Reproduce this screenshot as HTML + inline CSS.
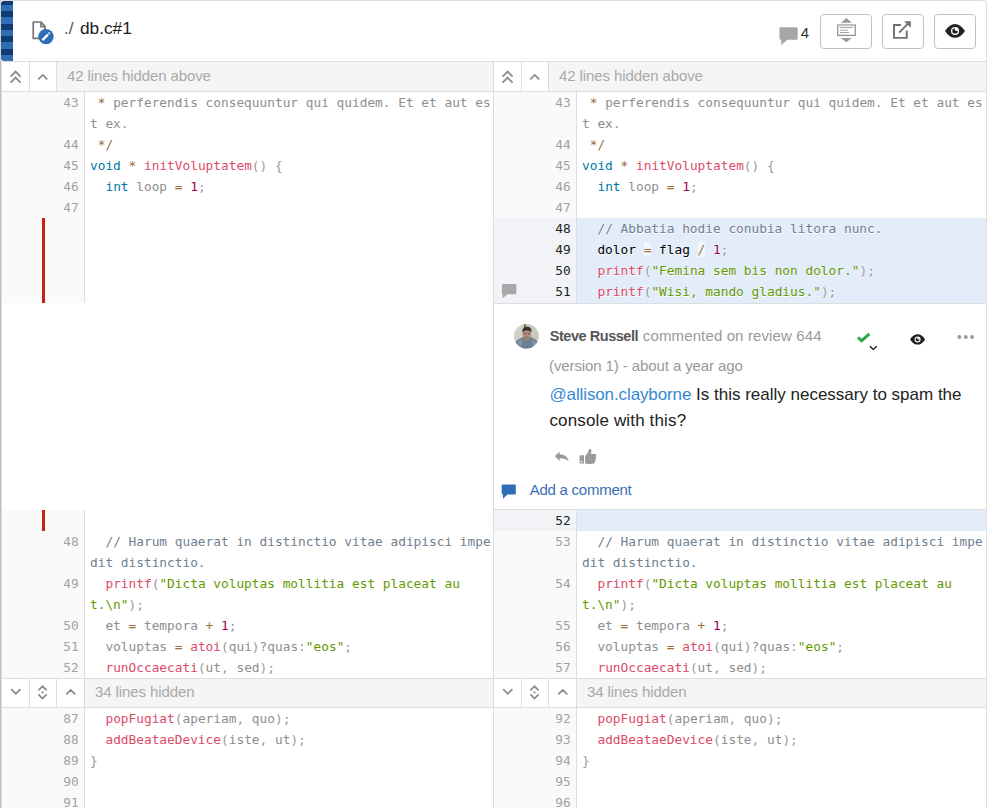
<!DOCTYPE html>
<html lang="en">
<head>
<meta charset="utf-8">
<title>db.c#1</title>
<style>
*{box-sizing:border-box;margin:0;padding:0}
html,body{width:988px;height:808px;overflow:hidden;background:#fff}
body{position:relative;font-family:"Liberation Sans",sans-serif;color:#222}
.abs{position:absolute}
/* card frame */
#btop{left:0;top:0;width:987px;height:830px;border-top:1px solid #dedede;border-right:1px solid #dedede;border-radius:0 4px 0 0}
#bright{display:none}
#bleft0{left:0;top:0;width:1px;height:61px;background:#d8d2cc}
#bleft{left:0;top:61px;width:1px;height:747px;background:#bcbcbc}
#bleft2{left:1px;top:61px;width:1px;height:747px;background:#e2e2e2}
#hline{left:13px;top:61px;width:974px;height:1px;background:#dedede}
#stripe{left:1px;top:1px;width:12px;height:60px;border-radius:3px 0 0 3px;
 background:linear-gradient(180deg,#0f3b73 0 4px,#2f6db5 4px 10px,#0f3b73 10px 16px,#2f6db5 16px 23px,#0f3b73 23px 29px,#2f6db5 29px 35px,#0f3b73 35px 41px,#2f6db5 41px 48px,#0f3b73 48px 54px,#2f6db5 54px 60px)}
#mid{left:493px;top:61px;width:1px;height:747px;background:#dcdcdc}
/* header */
#title{left:64px;top:18px;font-size:17.300px;line-height:20px;white-space:nowrap;color:#1b1c1d;word-spacing:1.500px}
#title .p{color:#555}
.hbtn{top:14px;height:35px;border:1px solid #c2c2c2;border-radius:4px;background:#fff}
#cnt{left:800.700px;top:25.400px;font-size:15px;line-height:16px;color:#333}
/* expander bars */
.exp{height:30px;border-top:1px solid #dedede;border-bottom:1px solid #dedede;background:#f5f5f5}
.exp .b{position:absolute;top:0;bottom:0;background:#fff;border-right:1px solid #dedede}
.exp .t{position:absolute;top:-.700px;height:28px;line-height:28px;font-size:15px;color:#a9a9a9;white-space:nowrap;letter-spacing:-.100px}
/* code rows */
.pane{top:92px;width:493px;overflow:hidden}
.r{position:relative;height:21px;width:100%}
.g{position:absolute;left:1px;top:0;width:83px;height:100%;background:#fafafa;border-right:1px solid #dedede;
 font-family:"DejaVu Sans Mono","Liberation Mono",monospace;font-size:12.8px;line-height:21px;text-align:right;padding-right:5.300px;color:#a2a2a2;white-space:pre}
.c{position:absolute;left:84px;top:0;right:0;height:100%;padding-left:5px;
 font-family:"DejaVu Sans Mono","Liberation Mono",monospace;font-size:12.8px;line-height:21px;white-space:pre;color:#8e8e8e;text-shadow:0 1px #fff}
.r.a .c{color:#000}
.r.a .g{background:#f1f3f7;color:#222}
.r.a .c{background:#e3edf9}
.k{color:#0077aa}.fn{color:#dd4a68}.o{color:#9a6e3a}.pu{color:#999}.n{color:#990055}.s{color:#669900}.cm{color:#708090}
.r.a .o{background:rgba(255,255,255,.5)}
.red{position:absolute;left:40px;top:0;width:3px;height:100%;background:#c9200f}

.r.fl .g{border-right:1px solid #dedede}
.ci{position:absolute;left:7px;top:3px}
#who{left:549.700px;top:326px;font-size:15px;line-height:20px;white-space:nowrap;color:#999}
#who span{letter-spacing:.130px;margin-left:.500px}
#who b{color:#555;font-size:14.500px;letter-spacing:-.450px}
#when{left:549px;top:356px;font-size:15px;line-height:20px;white-space:nowrap;color:#999;letter-spacing:-.100px}
#msg{left:549.400px;top:382px;font-size:17px;line-height:25.5px;white-space:nowrap;color:#222}
#msg .lk{color:#3589d0;letter-spacing:-.110px}
#msg .l2{letter-spacing:.150px}
#addc{left:529.700px;top:480px;font-size:15px;line-height:20px;white-space:nowrap;color:#3a6fb5;letter-spacing:-.250px}
</style>
</head>
<body>
<div class="abs" id="btop"></div>
<div class="abs" id="bright"></div>
<div class="abs" id="bleft0"></div>
<div class="abs" id="bleft"></div>
<div class="abs" id="bleft2"></div>
<div class="abs" id="hline"></div>
<div class="abs" id="stripe"></div>
<div class="abs" id="mid"></div>

<!-- header -->
<div class="abs" id="title"><span class="p">./</span> db.c#1</div>
<div class="abs" id="cnt">4</div>
<div class="abs hbtn" style="left:820px;width:52px"></div>
<div class="abs hbtn" style="left:882px;width:42px"></div>
<div class="abs hbtn" style="left:934px;width:42px"></div>

<div class="abs exp" style="left:2px;top:61px;width:491px;height:31px"><div class="b" style="left:0;width:28px"></div><div class="b" style="left:28px;width:27px"></div><div class="t" style="left:65px;top:.300px">42 lines hidden above</div><svg class="abs" style="left:0;top:0" width="56" height="28" viewBox="0 0 56 28"><path d="M8.60 14.55L13.60 9.55L18.60 14.55M8.60 20.55L13.60 15.55L18.60 20.55M36.26 17.45L40.76 12.95L45.26 17.45" fill="none" stroke="#8a8a8a" stroke-width="1.7"/></svg></div>
<div class="abs exp" style="left:494px;top:61px;width:492px;height:31px"><div class="b" style="left:0;width:28px"></div><div class="b" style="left:28px;width:27px"></div><div class="t" style="left:65px;top:.300px">42 lines hidden above</div><svg class="abs" style="left:0;top:0" width="56" height="28" viewBox="0 0 56 28"><path d="M8.60 14.55L13.60 9.55L18.60 14.55M8.60 20.55L13.60 15.55L18.60 20.55M36.26 17.45L40.76 12.95L45.26 17.45" fill="none" stroke="#8a8a8a" stroke-width="1.7"/></svg></div>

<div class="abs pane" style="left:1px;top:92px;width:492px"><div class="r"><div class="g">43</div><div class="c"> <span class="o">*</span> perferendis consequuntur qui quidem<span class="pu">.</span> Et et aut es</div></div>
<div class="r"><div class="g"></div><div class="c">t ex<span class="pu">.</span></div></div>
<div class="r"><div class="g">44</div><div class="c"> <span class="o">*</span><span class="o">/</span></div></div>
<div class="r"><div class="g">45</div><div class="c"><span class="k">void</span> <span class="o">*</span> <span class="fn">initVoluptatem</span><span class="pu">(</span><span class="pu">)</span> <span class="pu">{</span></div></div>
<div class="r"><div class="g">46</div><div class="c">  <span class="k">int</span> loop <span class="o">=</span> <span class="n">1</span><span class="pu">;</span></div></div>
<div class="r"><div class="g">47</div><div class="c"></div></div>
<div class="r fl" style="height:85px"><div class="g"><i class="red"></i></div></div></div>
<div class="abs pane" style="left:493px;top:92px;width:493px"><div class="r"><div class="g">43</div><div class="c"> <span class="o">*</span> perferendis consequuntur qui quidem<span class="pu">.</span> Et et aut es</div></div>
<div class="r"><div class="g"></div><div class="c">t ex<span class="pu">.</span></div></div>
<div class="r"><div class="g">44</div><div class="c"> <span class="o">*</span><span class="o">/</span></div></div>
<div class="r"><div class="g">45</div><div class="c"><span class="k">void</span> <span class="o">*</span> <span class="fn">initVoluptatem</span><span class="pu">(</span><span class="pu">)</span> <span class="pu">{</span></div></div>
<div class="r"><div class="g">46</div><div class="c">  <span class="k">int</span> loop <span class="o">=</span> <span class="n">1</span><span class="pu">;</span></div></div>
<div class="r"><div class="g">47</div><div class="c"></div></div>
<div class="r a"><div class="g">48</div><div class="c">  <span class="cm">// Abbatia hodie conubia litora nunc.</span></div></div>
<div class="r a"><div class="g">49</div><div class="c">  dolor <span class="o">=</span> flag <span class="o">/</span> <span class="n">1</span><span class="pu">;</span></div></div>
<div class="r a"><div class="g">50</div><div class="c">  <span class="fn">printf</span><span class="pu">(</span><span class="s">"Femina sem bis non dolor."</span><span class="pu">)</span><span class="pu">;</span></div></div>
<div class="r a" style="height:22px"><div class="g"><svg class="ci" width="16" height="15" viewBox="0 0 16 15"><path d="M2 0h12.200a1.100 1.100 0 0 1 1.100 1.100v8.100a1.100 1.100 0 0 1-1.100 1.100H6.300L1.700 14.200V10.300A1.100 1.100 0 0 1 .900 9.200V1.100A1.100 1.100 0 0 1 2 0z" fill="#a8a8a8"/></svg>51</div><div class="c">  <span class="fn">printf</span><span class="pu">(</span><span class="s">"Wisi, mando gladius."</span><span class="pu">)</span><span class="pu">;</span></div></div></div>

<!-- comment block (right) -->
<div class="abs" style="left:494px;top:303px;width:492px;height:1px;background:#dedede"></div>
<div class="abs" style="left:494px;top:509px;width:492px;height:1px;background:#dedede"></div>
<div class="abs" id="who"><b>Steve Russell</b> <span>commented on review 644</span></div>
<div class="abs" id="when">(version 1) - about a year ago</div>
<div class="abs" id="msg"><span class="lk">@allison.clayborne</span> Is this really necessary to spam the<br><span class="l2">console with this?</span></div>
<div class="abs" id="addc">Add a comment</div>

<div class="abs pane" style="left:1px;top:510px;width:492px"><div class="r fl" style="height:21px"><div class="g"><i class="red"></i></div></div>
<div class="r"><div class="g">48</div><div class="c">  <span class="cm">// Harum quaerat in distinctio vitae adipisci impe</span></div></div>
<div class="r"><div class="g"></div><div class="c"><span class="cm">dit distinctio.</span></div></div>
<div class="r"><div class="g">49</div><div class="c">  <span class="fn">printf</span><span class="pu">(</span><span class="s">"Dicta voluptas mollitia est placeat au</span></div></div>
<div class="r"><div class="g"></div><div class="c"><span class="s">t.\n"</span><span class="pu">)</span><span class="pu">;</span></div></div>
<div class="r"><div class="g">50</div><div class="c">  et <span class="o">=</span> tempora <span class="o">+</span> <span class="n">1</span><span class="pu">;</span></div></div>
<div class="r"><div class="g">51</div><div class="c">  voluptas <span class="o">=</span> <span class="fn">atoi</span><span class="pu">(</span>qui<span class="pu">)</span>?quas<span class="pu">:</span><span class="s">"eos"</span><span class="pu">;</span></div></div>
<div class="r"><div class="g">52</div><div class="c">  <span class="fn">runOccaecati</span><span class="pu">(</span>ut<span class="pu">,</span> sed<span class="pu">)</span><span class="pu">;</span></div></div></div>
<div class="abs pane" style="left:493px;top:510px;width:493px"><div class="r a"><div class="g">52</div><div class="c"></div></div>
<div class="r"><div class="g">53</div><div class="c">  <span class="cm">// Harum quaerat in distinctio vitae adipisci impe</span></div></div>
<div class="r"><div class="g"></div><div class="c"><span class="cm">dit distinctio.</span></div></div>
<div class="r"><div class="g">54</div><div class="c">  <span class="fn">printf</span><span class="pu">(</span><span class="s">"Dicta voluptas mollitia est placeat au</span></div></div>
<div class="r"><div class="g"></div><div class="c"><span class="s">t.\n"</span><span class="pu">)</span><span class="pu">;</span></div></div>
<div class="r"><div class="g">55</div><div class="c">  et <span class="o">=</span> tempora <span class="o">+</span> <span class="n">1</span><span class="pu">;</span></div></div>
<div class="r"><div class="g">56</div><div class="c">  voluptas <span class="o">=</span> <span class="fn">atoi</span><span class="pu">(</span>qui<span class="pu">)</span>?quas<span class="pu">:</span><span class="s">"eos"</span><span class="pu">;</span></div></div>
<div class="r"><div class="g">57</div><div class="c">  <span class="fn">runOccaecati</span><span class="pu">(</span>ut<span class="pu">,</span> sed<span class="pu">)</span><span class="pu">;</span></div></div></div>

<div class="abs exp" style="left:2px;top:678px;width:491px"><div class="b" style="left:0;width:28px"></div><div class="b" style="left:28px;width:27px"></div><div class="b" style="left:55px;width:28px"></div><div class="t" style="left:93px">34 lines hidden</div><svg class="abs" style="left:0;top:0" width="84" height="28" viewBox="0 0 84 28"><path d="M9.20 10.20L13.80 14.80L18.40 10.20M36.40 11.40L40.50 7.30L44.60 11.40M36.40 15.40L40.50 19.50L44.60 15.40M64.30 15.35L68.80 10.85L73.30 15.35" fill="none" stroke="#8a8a8a" stroke-width="1.7"/><circle cx="40.5" cy="13.35" r="1.15" fill="#8a8a8a"/></svg></div>
<div class="abs exp" style="left:494px;top:678px;width:492px"><div class="b" style="left:0;width:28px"></div><div class="b" style="left:28px;width:27px"></div><div class="b" style="left:55px;width:28px"></div><div class="t" style="left:93px">34 lines hidden</div><svg class="abs" style="left:0;top:0" width="84" height="28" viewBox="0 0 84 28"><path d="M9.20 10.20L13.80 14.80L18.40 10.20M36.40 11.40L40.50 7.30L44.60 11.40M36.40 15.40L40.50 19.50L44.60 15.40M64.30 15.35L68.80 10.85L73.30 15.35" fill="none" stroke="#8a8a8a" stroke-width="1.7"/><circle cx="40.5" cy="13.35" r="1.15" fill="#8a8a8a"/></svg></div>

<div class="abs pane" style="left:1px;top:708px;width:492px"><div class="r"><div class="g">87</div><div class="c">  <span class="fn">popFugiat</span><span class="pu">(</span>aperiam<span class="pu">,</span> quo<span class="pu">)</span><span class="pu">;</span></div></div>
<div class="r"><div class="g">88</div><div class="c">  <span class="fn">addBeataeDevice</span><span class="pu">(</span>iste<span class="pu">,</span> ut<span class="pu">)</span><span class="pu">;</span></div></div>
<div class="r"><div class="g">89</div><div class="c"><span class="pu">}</span></div></div>
<div class="r"><div class="g">90</div><div class="c"></div></div>
<div class="r"><div class="g">91</div><div class="c"></div></div></div>
<div class="abs pane" style="left:493px;top:708px;width:493px"><div class="r"><div class="g">92</div><div class="c">  <span class="fn">popFugiat</span><span class="pu">(</span>aperiam<span class="pu">,</span> quo<span class="pu">)</span><span class="pu">;</span></div></div>
<div class="r"><div class="g">93</div><div class="c">  <span class="fn">addBeataeDevice</span><span class="pu">(</span>iste<span class="pu">,</span> ut<span class="pu">)</span><span class="pu">;</span></div></div>
<div class="r"><div class="g">94</div><div class="c"><span class="pu">}</span></div></div>
<div class="r"><div class="g">95</div><div class="c"></div></div>
<div class="r"><div class="g">96</div><div class="c"></div></div></div>

<!-- header icons -->
<svg class="abs" style="left:28px;top:16px" width="30" height="32" viewBox="0 0 30 32">
 <path d="M5.25 6H13l4 4.300V22.400H5.250z" fill="#fff" stroke="#767676" stroke-width="1.700" stroke-linejoin="round"/>
 <path d="M13 6v4.700h4" fill="none" stroke="#767676" stroke-width="1.700" stroke-linejoin="round"/>
 <circle cx="18" cy="20.600" r="7.700" fill="#2f6db5"/>
 <path d="M14.400 24.100L20 18.500" stroke="#fff" stroke-width="2.300" fill="none"/>
 <path d="M20.700 17.800L21.600 16.900" stroke="#fff" stroke-width="2.300" fill="none"/>
</svg>
<svg class="abs" style="left:779px;top:27px" width="20" height="19" viewBox="0 0 20 19">
 <path d="M1.700.300h15.800a1.200 1.200 0 0 1 1.200 1.200v10.100a1.200 1.200 0 0 1-1.200 1.200H8.400L2.200 18.100V12.800H1.700A1.200 1.200 0 0 1 .5 11.600V1.500A1.200 1.200 0 0 1 1.700.300z" fill="#a6a6a6"/>
</svg>
<svg class="abs" style="left:830px;top:14px" width="34" height="34" viewBox="0 0 34 34">
 <path d="M16.400 4L21.900 8.800H10.900z" fill="#999"/>
 <path d="M10.900 24.100H21.700L16.300 28.200z" fill="#999"/>
 <rect x="7.700" y="11" width="17.600" height="10.400" fill="#fff" stroke="#999" stroke-width="1.300"/>
 <rect x="8.700" y="12" width="15.600" height="8.400" fill="none" stroke="#d8d8d8" stroke-width=".7"/>
 <path d="M10 13.550H22.800M10 16.200H17.900M10 18.500H18.900" stroke="#999" stroke-width=".9" fill="none"/>
</svg>
<svg class="abs" style="left:886px;top:14px" width="34" height="34" viewBox="0 0 34 34">
 <path d="M14.900 11.050H8V23.850H20.750V16.400" fill="none" stroke="#707070" stroke-width="1.900"/>
 <path d="M13.100 18.600L21.800 9.900" stroke="#707070" stroke-width="1.900" fill="none"/>
 <path d="M18.100 7.150H24.800V13.700z" fill="#707070"/>
</svg>
<svg class="abs" style="left:944px;top:23px" width="22" height="16" viewBox="0 0 22 16">
 <path d="M1 7.900C4 3.300 7.500 1 11 1s7 2.300 10 6.900C18 12.500 14.500 14.700 11 14.700S4 12.500 1 7.900z" fill="#222"/>
 <circle cx="11" cy="7.900" r="4" fill="#fff"/>
 <circle cx="11" cy="7.900" r="2.700" fill="#222"/>
 <circle cx="12.500" cy="6.300" r="1.750" fill="#fff"/>
</svg>


<!-- comment icons -->
<svg class="abs" style="left:850px;top:322px" width="40" height="34" viewBox="0 0 40 34">
 <path d="M8 15.400L11.600 18.700L19.400 11.800" fill="none" stroke="#2ea650" stroke-width="2.900"/>
 <path d="M20 24.300L23.200 27.400L26.700 24.300" fill="none" stroke="#111" stroke-width="1.300"/>
</svg>
<svg class="abs" style="left:909px;top:333px" width="17" height="13" viewBox="0 0 17 13">
 <path d="M1 6.400C3.300 2.800 6 1.200 8.600 1.200S13.900 2.800 16.200 6.400C13.900 10 11.200 11.600 8.600 11.600S3.300 10 1 6.400z" fill="#222"/>
 <circle cx="8.600" cy="6.400" r="3" fill="#fff"/>
 <circle cx="8.600" cy="6.400" r="1.900" fill="#222"/>
 <circle cx="9.750" cy="5.200" r="1.300" fill="#fff"/>
</svg>
<svg class="abs" style="left:955px;top:333px" width="22" height="8" viewBox="0 0 22 8"><g fill="#9a9a9a">
 <circle cx="4.400" cy="4" r="1.900"/><circle cx="10.800" cy="4" r="1.900"/><circle cx="17.100" cy="4" r="1.900"/></g></svg>
<svg class="abs" style="left:553px;top:449px" width="18" height="15" viewBox="0 0 18 15">
 <path d="M1.800 7.300L6.600 2.400V5.300C11.500 5.500 14.800 8 15.700 12.800C13.500 10.200 10.800 9.300 6.600 9.300V12z" fill="#9a9a9a"/>
</svg>
<svg class="abs" style="left:578px;top:447px" width="20" height="20" viewBox="0 0 20 20">
 <path d="M1.600 8.300H6V16.500H1.600z" fill="#9a9a9a"/>
 <circle cx="3.600" cy="14.600" r=".8" fill="#fff"/>
 <path d="M7.100 8.900C8.800 7.600 10.300 5.600 10.600 3.200C10.700 1.800 12.800 1.500 13.300 3.200C13.700 4.600 13.200 5.900 12.700 7.100H17C18.400 7.100 18.700 8.800 17.800 9.400C18.500 10.100 18.300 11.200 17.500 11.700C18 12.500 17.700 13.500 17 13.900C17.300 15 16.600 16 15.400 16.600C13 17.400 9.500 17.200 7.100 16.200z" fill="#9a9a9a"/>
</svg>
<svg class="abs" style="left:501px;top:484px" width="16" height="16" viewBox="0 0 16 16">
 <path d="M1.700.600h12.100a1 1 0 0 1 1 1v8a1 1 0 0 1-1 1H6.400L2 14.800V10.600H1.700A1 1 0 0 1 .7 9.600V1.600A1 1 0 0 1 1.700.600z" fill="#2f6db5"/>
</svg>
<!-- avatar -->
<svg class="abs" style="left:513px;top:323px" width="27" height="27" viewBox="0 0 27 27">
 <defs><clipPath id="avc"><circle cx="13.400" cy="13.300" r="12.400"/></clipPath>
 <filter id="avb" x="-20%" y="-20%" width="140%" height="140%"><feGaussianBlur stdDeviation=".6"/></filter></defs>
 <g clip-path="url(#avc)"><g filter="url(#avb)">
  <rect x="-3" y="-3" width="33" height="33" fill="#cbc7bf"/>
  <rect x="-3" y="-3" width="12" height="33" fill="#d3cfc8"/>
  <rect x="11" y="-1" width="1.600" height="7" fill="#7a5c45"/>
  <path d="M-1 29C0 20.500 3 17.500 8.500 14.800L10.500 13.600L13.800 18L17.300 13.600L19.500 14.800C24.500 17.500 27 20.500 28 29z" fill="#6b8095"/>
  <path d="M4 20C6 18 8 17 9.500 16.500L8 24zM19 16.500C21 17.500 23 19 24.500 21L20 24z" fill="#8497aa"/>
  <path d="M10.800 14L13.800 18.400L17 14L13.900 15.500z" fill="#9c7766"/>
  <ellipse cx="13.900" cy="11.300" rx="4.100" ry="5.300" fill="#b58d7a"/>
  <path d="M10.400 13.500C11.500 16.800 16.300 16.800 17.500 13.500C16.500 14.800 15 15.100 13.900 15.100S11.400 14.800 10.400 13.500z" fill="#8d6a5b"/>
  <path d="M10.800 10.600H13M14.900 10.600H17.100" stroke="#5a4238" stroke-width=".9" fill="none"/>
  <path d="M12.600 13.800H15.300" stroke="#8a5f55" stroke-width=".7" fill="none"/>
  <path d="M9.500 9.800C8.900 5.600 11.300 3.700 14.200 3.700C17.400 3.700 19 6 18.400 9.800C17.600 7.900 16.200 7.300 13.900 7.400C11.700 7.400 10.400 8 9.500 9.800z" fill="#38302b"/>
 </g></g>
</svg>

</body>
</html>
